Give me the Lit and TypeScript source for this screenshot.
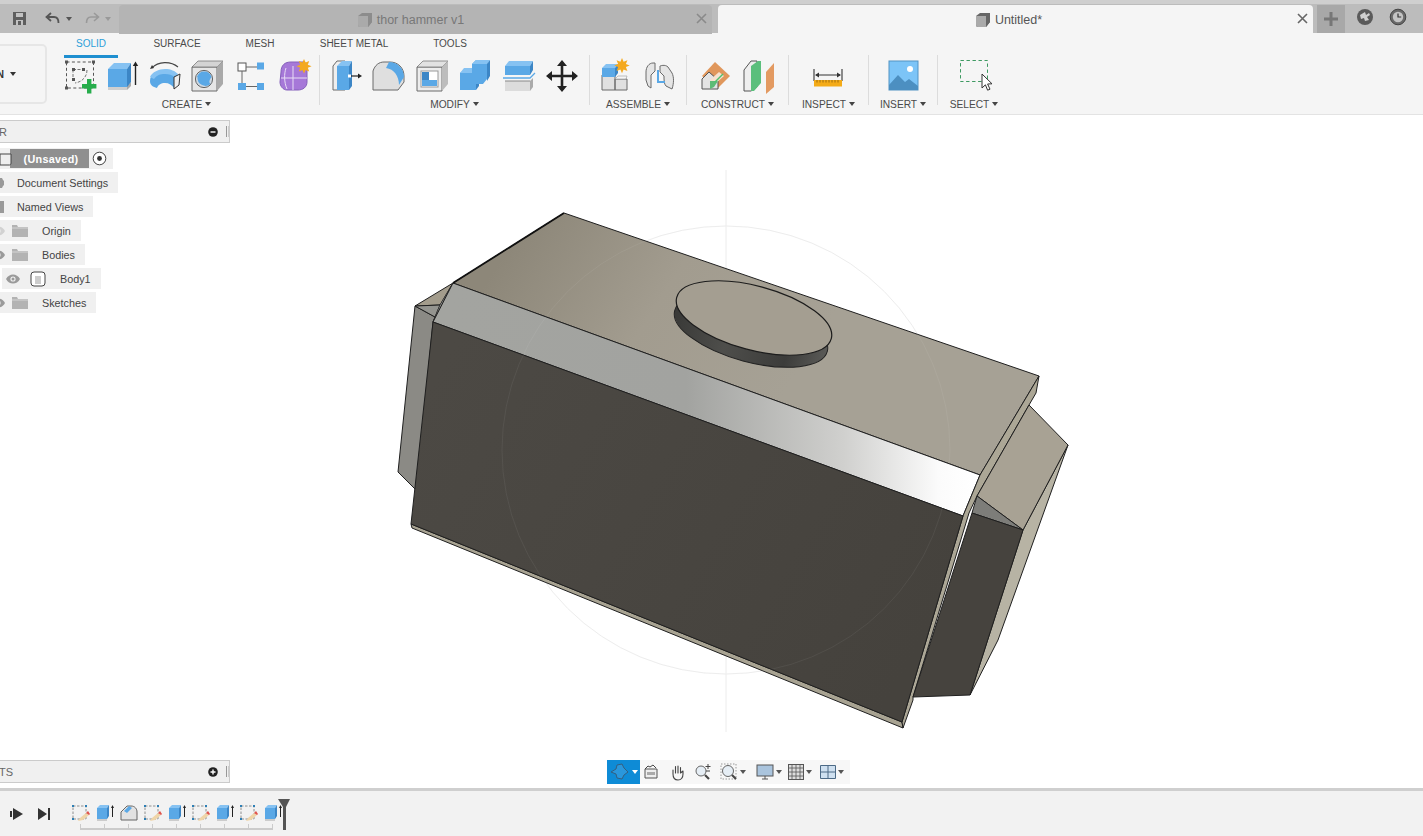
import { LitElement, html, css, svg } from "lit";
import { customElement } from "lit/decorators.js";

const B = "#5aa8e6", BL = "#86c2f2", BD = "#3c86c6", O = "#6a6a6a";

const icons: Record<string, any> = {
  sketch: svg`<rect x="5.500" y="4" width="27" height="26" fill="none" stroke="#555" stroke-dasharray="3 2.4"/>
    <path d="M12 11.500h10M12 11.500v10M26 12c0 7-5 12-12 13" fill="none" stroke="#777" stroke-dasharray="3 1.500"/>
    <g fill="#555"><rect x="4" y="2.500" width="3" height="3"/><rect x="31" y="2.500" width="3" height="3"/><rect x="4" y="28.500" width="3" height="3"/><rect x="11" y="10" width="3" height="3"/><rect x="11" y="20" width="3" height="3"/><rect x="21" y="10" width="3" height="3"/></g>
    <path d="M26 21h4.400v5h5v4.400h-5v5H26v-5h-5v-4.400h5z" fill="#27ad4c"/>`,
  extrude: svg`<path d="M4 28h19v4H4z" fill="#cfcfcf"/><path d="M23 28l4-4v4l-4 4z" fill="#aaa"/>
    <path d="M4 11h19v18H4z" fill="${B}"/><path d="M4 11l6-6h17l-4 6z" fill="${BL}"/><path d="M23 11l4-6v19l-4 5z" fill="${BD}"/>
    <path d="M31.500 27V6" stroke="#222" stroke-width="1.400"/><path d="M28.800 8l2.700-4.600L34.200 8z" fill="#222"/>`,
  revolve: svg`<path d="M3 23c0-7 7-10 15-10 6 0 10 1 13 4l-4 13c-2-3-5-5-9-5-4 0-7 2-8 5-4-1-7-3-7-7z" fill="${B}"/>
    <path d="M3 19c2-5 9-8 15-8 6 0 10 2 13 5l-3 3c-3-2-6-3-10-3-5 0-8 1-11 5z" fill="${BL}"/>
    <path d="M27 19l6-3-1 11-5 4z" fill="#eee" stroke="#333"/>
    <path d="M5 10C11 3 24 3 31 9" fill="none" stroke="#444" stroke-width="1.100"/><path d="M3 11l2-4 2 3z" fill="#333"/>`,
  hole: svg`<path d="M2 9h25v24H2z" fill="#e6e6e6" stroke="${O}"/><path d="M2 9l6-6h25l-6 6z" fill="#d4d4d4" stroke="${O}" stroke-width=".7"/><path d="M27 9l6-6v23l-6 7z" fill="#a9a9a9"/>
    <circle cx="14" cy="21" r="8.600" fill="#cdd8e2" stroke="#666"/><path d="M7 19a7.500 7.500 0 0 1 14.500 0c-2 3-3 5-1 7a8 8 0 0 1-13-7z" fill="${B}"/>`,
  form: svg`<rect x="5" y="5" width="8" height="8" fill="#fff" stroke="#555"/><rect x="24" y="4.500" width="7" height="7" fill="${B}"/>
    <rect x="5" y="25" width="8" height="7" fill="${B}"/><rect x="24" y="25" width="7" height="7" fill="${B}"/>
    <path d="M13 9h11M9 13v12M13 28.500h11" stroke="#666"/>`,
  derive: svg`<path d="M5 14c0-7 4-10 10-10h12c3 0 4 3 4 6v14c0 5-4 8-9 8H11c-4 0-7-4-7-8z" fill="#a678d8" stroke="#8560bb"/><path d="M5 20h26M17 8v24M10 10c-2 6-2 14 1 21" stroke="#e8def5" fill="none"/>
    <path d="M28 1l1.600 3.600 3.600-1.600-1.400 3.800 3.800 1.400-3.800 1.600 1.400 3.600-3.600-1.400-1.600 3.600-1.600-3.600-3.600 1.400 1.400-3.600-3.800-1.600 3.800-1.400-1.400-3.800 3.600 1.600z" fill="#f4a91f"/>`,
  press: svg`<path d="M5 8l4-5h8v29H5z" fill="#eee" stroke="${O}"/><path d="M9 8l5-5h10l-3 5z" fill="${BL}"/><path d="M9 8h12v24H9z" fill="${B}"/><path d="M21 8l3-5v25l-3 4z" fill="${BD}"/>
    <path d="M22 18h9" stroke="#222" stroke-width="1.200"/><path d="M30 15.500l4 2.500-4 2.500z" fill="#222"/><rect x="20" y="16.500" width="3" height="3" fill="#fff"/>`,
  fillet: svg`<path d="M2 13c2-6 6-9 11-9h6c8 0 14 6 14 14v6l-6 8H2z" fill="#dfdfdf" stroke="${O}"/><path d="M18 4c8 0 15 6 15 15l-5 8c0-9-5-16-13-17z" fill="${B}"/>`,
  shell: svg`<path d="M2 9h25v24H2z" fill="#ededed" stroke="${O}"/><path d="M2 9l6-6h25l-6 6z" fill="#e2e2e2" stroke="${O}" stroke-width=".7"/><path d="M27 9l6-6v23l-6 7z" fill="#bdbdbd"/>
    <rect x="6" y="13" width="17" height="16" fill="#fff" stroke="#999"/><path d="M7 14h7v8h8v6H7z" fill="${B}"/><path d="M7 14h7v8h-7z" fill="${BD}"/>`,
  combine: svg`<path d="M2 15l5-4h11v21H2z" fill="${B}"/><path d="M2 15l4-5h12l-3 5z" fill="${BL}"/><path d="M14 6l4-4h13l-2 5v14l-4 5H14z" fill="${B}"/><path d="M14 6l4-4h14l-3 4z" fill="${BL}"/><path d="M29 6l3-4v16l-3 5z" fill="${BD}"/><path d="M18 26v6l3-4v-2z" fill="${BD}"/>`,
  split: svg`<path d="M3 8l4-5h24l-3 5z" fill="${BL}"/><path d="M3 8h25v9H3z" fill="${B}"/><path d="M28 8l3-5v9l-3 5z" fill="${BD}"/>
    <path d="M1 20h27l5-5" stroke="${B}" fill="none" stroke-width="1.300"/><path d="M3 23h25v10H3z" fill="#dcdcdc"/><path d="M28 23l3-3v9l-3 4z" fill="#aaa"/><path d="M3 23h25" stroke="#888"/>`,
  move: svg`<path d="M17 4v28M3 18h28" stroke="#222" stroke-width="2.600"/><path d="M17 2l5 6H12zM17 34l5-6H12zM1 18l6-5v10zM33 18l-6-5v10z" fill="#222"/>`,
  newcomp: svg`<path d="M4 17h13v15H4zM17 21h12v11H17z" fill="#e0e0e0" stroke="${O}"/><path d="M4 10h13v9H4z" fill="${B}"/><path d="M4 10l4-4h12l-3 4z" fill="${BL}"/><path d="M17 10l3-4v9l-3 4z" fill="${BD}"/>
    <path d="M17 21l3-3h9l-1 3z" fill="#f5f5f5" stroke="#999" stroke-width=".6"/>
    <path d="M24 0l1.600 3.800 3.800-1.600-1.500 3.800 3.800 1.600-3.800 1.500 1.500 3.900-3.800-1.600-1.600 3.800-1.600-3.800-3.800 1.600 1.500-3.900-3.800-1.500 3.800-1.600-1.500-3.800 3.800 1.600z" fill="#f4a91f"/>`,
  joint: svg`<path d="M3 14c0-5 3-9 7-9h2v8l-4 4v13l-3-2-2-6z" fill="#e5e5e5" stroke="${O}"/><path d="M17 8c0 0 5-2 8 1l4 6c2 4 2 10 0 16l-6-3c-2-2-2-6-2-10l-4-4z" fill="#e5e5e5" stroke="${O}"/><path d="M15 12v12h7" fill="none" stroke="${B}" stroke-width="2"/>`,
  plane: svg`<path d="M17 4l15 14-13 13L4 18z" fill="#e0975c"/><path d="M4 31V21l7-7 9 8v9z" fill="#e3e3e3" stroke="#555"/><path d="M12 22l9-8 5 4-9 8z" fill="#f6e2cf"/><path d="M12 31v-8h8l-4 6z" fill="#5dbb76"/><path d="M17 24l8-8" stroke="#4fbf6e" stroke-width="1.500"/>`,
  mid: svg`<path d="M2 12l7-9h6v26l-6 4H2z" fill="#eee" stroke="#555"/><path d="M9 33V8l7-5h3v22l-7 8z" fill="#5bbf7c"/><path d="M24 14l8-9v24l-8 7z" fill="#e39a61"/>`,
  measure: svg`<path d="M3 11v12M31 11v12" stroke="#333" stroke-width="1.100"/><path d="M5 17h24" stroke="#333"/><path d="M4 17l4-2.600v5.200zM30 17l-4-2.600v5.200z" fill="#333"/>
    <rect x="3" y="22" width="28" height="6.500" fill="#f4ab18"/><path d="M6 22v2.500M9 22v2.500M12 22v2.500M15 22v2.500M18 22v2.500M21 22v2.500M24 22v2.500M27 22v2.500" stroke="#8a5d07" stroke-width=".8"/>`,
  image: svg`<rect x="4" y="3" width="29" height="29" fill="#7cc4f7" stroke="#5294c4"/><circle cx="25" cy="11" r="3" fill="#fff"/><path d="M4 27l9-10 7 7 4-3 9 7v4H4z" fill="#4c8fc1"/>`,
  select: svg`<rect x="4.500" y="2.500" width="27" height="21" fill="none" stroke="#3e9a62" stroke-dasharray="3.400 2.600"/><path d="M26 16v14l3.400-3.200 2.200 5.400 2.400-1-2.400-5.200 4.400-.2z" fill="#fff" stroke="#333"/>`,
};

const groups = [
  { label: "CREATE", w: 266, c: 43, icons: ["sketch", "extrude", "revolve", "hole", "form", "derive"] },
  { label: "MODIFY", w: 270, c: 43.5, icons: ["press", "fillet", "shell", "combine", "split", "move"] },
  { label: "ASSEMBLE", w: 97, c: 45, icons: ["newcomp", "joint"] },
  { label: "CONSTRUCT", w: 102, c: 44, icons: ["plane", "mid"] },
  { label: "INSPECT", w: 80, c: 43, icons: ["measure"] },
  { label: "INSERT", w: 69, c: 43, icons: ["image"] },
  { label: "SELECT", w: 72, c: 43, icons: ["select"] },
];

const tabs = [
  { t: "SOLID", w: 54, on: true }, { t: "SURFACE", w: 118 }, { t: "MESH", w: 48 },
  { t: "SHEET METAL", w: 140 }, { t: "TOOLS", w: 52 },
];

const cube = (c = "#777") => html`<svg width="16" height="16" viewBox="0 0 16 16"><path d="M1 4l4-3h10v9l-4 5H3C1 15 1 13 1 12z" fill="${c}"/><path d="M1 4h10v11H3C1 15 1 13 1 12z" fill="#aaa"/><path d="M11 4l4-3v9l-4 5z" fill="${c}"/></svg>`;
const folder = html`<svg class="ic" width="16" height="12" viewBox="0 0 16 12"><path d="M0 0h5l1 2h10v10H0z" fill="#b3b3b3"/><path d="M0 3h16" stroke="#eee" stroke-width=".6"/></svg>`;
const eye = (c: string) => html`<svg width="14" height="10" viewBox="0 0 14 10"><path d="M0 5c3-6 11-6 14 0-3 6-11 6-14 0z" fill="${c}"/><circle cx="7" cy="5" r="2.600" fill="#f0f0f0"/><circle cx="7" cy="5" r="1.500" fill="${c}"/></svg>`;

const miniSketch = html`<svg width="20" height="20" viewBox="0 0 20 20"><rect x="2" y="3" width="13" height="13" fill="none" stroke="#777" stroke-dasharray="2.500 1.500" stroke-width=".8"/><g fill="#2d7fb5"><rect x="1" y="2" width="2" height="2"/><rect x="14" y="2" width="2" height="2"/><rect x="1" y="15" width="2" height="2"/></g><path d="M7 18l2-3 6-5 3 2-6 5z" fill="#efd5a8"/><path d="M15 10l3 2 1-1-2-3z" fill="#e0534b"/></svg>`;
const miniExtrude = html`<svg width="20" height="20" viewBox="0 0 20 20"><path d="M2 5h10v11H2z" fill="${B}"/><path d="M2 5l3-3h9l-2 3z" fill="${BL}"/><path d="M12 5l2-3v11l-2 3z" fill="${BD}"/><path d="M2 16h10v2H2z" fill="#ccc"/><path d="M17.500 14V4" stroke="#222"/><path d="M16 5l1.500-3L19 5z" fill="#222"/></svg>`;
const miniFillet = html`<svg width="20" height="20" viewBox="0 0 20 20"><path d="M2 9l6-6h4c4 0 6 3 6 6v8H2z" fill="#e2e2e2" stroke="#666"/><path d="M5 8l5-5 3 2-5 5z" fill="${B}"/></svg>`;
const timeline = [miniSketch, miniExtrude, miniFillet, miniSketch, miniExtrude, miniSketch, miniExtrude, miniSketch, miniExtrude];

@customElement("app-root")
export class AppRoot extends LitElement {
  static styles = css`
    :host { display: block; width: 1423px; height: 836px; overflow: hidden; background: #fff; font-family: "Liberation Sans", Arial, sans-serif; color: #4a4a4a; font-size: 11px; }
    .app { display: flex; flex-direction: column; height: 836px; }
    .caret { display: inline-block; width: 0; height: 0; border-left: 3px solid transparent; border-right: 3px solid transparent; border-top: 4px solid #444; margin-left: 3px; vertical-align: 2px; }

    .topbar { height: 33px; flex: none; display: flex; background: #bcbcbc; border-top: 4px solid #cfcfcf; box-sizing: border-box; }
    .qa { width: 119px; flex: none; display: flex; align-items: center; padding-left: 12px; box-sizing: border-box; }
    .qa svg { flex: none; }
    .qa .save { margin-right: 18px; }
    .qa .undo { margin-right: 6px; }
    .qa .redo { margin-left: 13px; margin-right: 5px; }
    .qa .caret { border-top-color: #555; margin: 0; }
    .qa .caret.off { border-top-color: #999; }
    .tab { flex: none; height: 29px; margin-top: 1px; box-sizing: border-box; display: flex; align-items: center; justify-content: center; position: relative; border-radius: 4px 4px 0 0; font-size: 12.5px; }
    .tab.off { width: 593px; background: #b4b4b4; color: #787878; margin-right: 6px; padding-right: 10px; }
    .tab.on { width: 595px; background: #f5f5f5; color: #555; margin-right: 4px; padding-right: 14px; }
    .tab .t-ic { margin-right: 4px; display: flex; }
    .tab .x { position: absolute; right: 4px; top: 7px; width: 13px; height: 13px; }
    .plus { width: 28px; height: 28px; margin-top: 1px; background: #a8a8a8; flex: none; display: flex; align-items: center; justify-content: center; }
    .sysic { flex: none; display: flex; align-items: center; margin-top: -3px; }
    .sysic.a { margin-left: 11px; }
    .sysic.b { margin-left: 15px; }

    .ribbon { height: 82px; flex: none; background: #f5f5f5; border-bottom: 1px solid #e3e3e3; box-sizing: border-box; display: flex; flex-direction: column; }
    .tabs { display: flex; height: 22px; padding-left: 64px; }
    .rtab { text-align: center; line-height: 22px; position: relative; color: #4a4a4a; font-size: 10px; }
    .rtab.on { color: #2c9fd9; }
    .rtab.on::after { content: ""; position: absolute; left: 0; right: 0; top: 22px; height: 2.500px; background: #1f8fd0; }
    .groups { display: flex; height: 59px; }
    .ws { flex: none; width: 57px; margin-left: -10px; margin-top: -11px; height: 60px; box-sizing: border-box; border: 2px solid #e6e6e6; border-radius: 5px; display: flex; align-items: center; justify-content: flex-end; padding-right: 29px; font-weight: bold; font-size: 10px; color: #333; white-space: nowrap; }
    .ws .caret { margin-left: 6px; border-top-color: #333; }
    .grp { flex: none; box-sizing: border-box; display: flex; flex-direction: column; align-items: center; }
    .grp.first { margin-left: 7px; }
    .grp.sep { border-right: 1px solid #dcdcdc; height: 50px; }
    .grp .icons { display: flex; justify-content: center; height: 36px; margin-top: 3px; }
    .grp .cell { display: flex; justify-content: center; }
    .grp .lbl { font-size: 10.2px; margin-top: 4px; white-space: nowrap; line-height: 13px; }

    .canvas { flex: 1; position: relative; background: #fff; overflow: hidden; }
    .geom { position: absolute; left: 0; top: 0; }

    .bar { position: absolute; left: 0; width: 230px; height: 23px; box-sizing: border-box; background: #f0f0f0; border: 1px solid #cbcbcb; border-left: 0; display: flex; align-items: center; color: #666; }
    .bar.hd { top: 5px; }
    .bar.ft { top: 645px; }
    .bar .name { flex: 1; margin-left: -1px; }
    .bar .grip { width: 1px; height: 11px; background: #999; margin: 0 2px 0 8px; box-shadow: 2px 0 0 #ccc; }
    .tree { position: absolute; left: 0; top: 33px; display: flex; flex-direction: column; gap: 3px; }
    .row { display: flex; height: 21px; }
    .pill { display: flex; align-items: center; background: #f0f0f0; padding-right: 10px; height: 21px; color: #444; white-space: nowrap; font-size: 10.8px; }
    .lead { display: flex; justify-content: flex-end; align-items: center; overflow: hidden; flex: none; }
    .lead.l12 { width: 12px; }
    .lead.l12 svg { margin-right: 7px; flex: none; }
    .lead.l17 { width: 17px; justify-content: flex-start; }
    .ic { margin-right: 14px; flex: none; }
    .root { padding-right: 0; }
    .rootbox { height: 19px; background: #8f8f8f; color: #fff; font-weight: bold; display: flex; align-items: center; justify-content: center; width: 79px; margin-left: 10px; letter-spacing: .3px; padding-left: 3px; box-sizing: border-box; position: relative; }
    .rootbox svg { position: absolute; left: -14px; top: 1px; }
    .radio { margin: 0 6px 0 3px; flex: none; }
    .body { margin-left: 2px; }
    .body .e { margin: 0 10px 0 4px; display: flex; }
    .body .c { margin-right: 14px; display: flex; }

    .nav { position: absolute; left: 607px; top: 645px; height: 24px; display: flex; align-items: center; background: #f7f7f7; }
    .nav .cur { width: 33px; height: 24px; background: #0e8bd6; display: flex; align-items: center; padding-left: 3px; box-sizing: border-box; }
    .nav .cur .caret { border-top-color: #fff; margin-left: 2px; }
    .nav .n { display: flex; align-items: center; justify-content: center; height: 24px; }
    .nav .caret { margin-left: 2px; border-top-color: #555; }
    .w22 { width: 22px; } .w28 { width: 28px; } .w30 { width: 30px; } .w34 { width: 34px; } .w36 { width: 36px; } .w38 { width: 38px; }

    .tl { height: 48px; flex: none; background: #f2f2f2; border-top: 3px solid #cfcfcf; box-sizing: border-box; display: flex; position: relative; padding-left: 10px; }
    .ctrl { display: flex; align-items: center; gap: 13px; width: 59px; height: 45px; flex: none; }
    .steps { display: flex; flex-direction: column; }
    .steps .items { display: flex; margin-top: 12px; }
    .steps .it { width: 24px; height: 20px; display: flex; justify-content: center; }
    .ruler { height: 6px; margin: 1px 0 0 11px; width: 193px; box-sizing: border-box; border-bottom: 2px solid #cbcbcb; background: repeating-linear-gradient(90deg, #cbcbcb 0 1px, transparent 1px 24px); }
    .head { position: absolute; left: 278px; top: 8px; }
  `;

  private ribbon() {
    return html`<div class="ribbon">
      <div class="tabs">${tabs.map((t) => html`<div class="rtab ${t.on ? "on" : ""}" style="width:${t.w}px">${t.t}</div>`)}</div>
      <div class="groups">
        <div class="ws">N<i class="caret"></i></div>
        ${groups.map((g, i) => html`<div class="grp ${i === 0 ? "first" : ""} ${i < 6 ? "sep" : ""}" style="width:${g.w}px">
          <div class="icons">${g.icons.map((n) => html`<div class="cell" style="width:${g.c}px"><svg width="36" height="36" viewBox="0 0 36 36">${icons[n]}</svg></div>`)}</div>
          <div class="lbl">${g.label}<i class="caret"></i></div>
        </div>`)}
      </div>
    </div>`;
  }

  private topbar() {
    return html`<div class="topbar">
      <div class="qa">
        <svg class="save" width="15" height="15" viewBox="0 0 15 15"><path d="M1 1h13v13H1z" fill="#5e5e5e"/><path d="M4 2h7v4H4z" fill="#c2c2c2"/><path d="M4 9h7v5H4z" fill="#c2c2c2"/><path d="M6 10h3v4H6z" fill="#5e5e5e"/></svg>
        <svg class="undo" width="15" height="13" viewBox="0 0 15 13"><path d="M6 1L1.500 5 6 9M2 5h7c3 0 4.500 2 4.500 6" fill="none" stroke="#555" stroke-width="1.800"/></svg>
        <i class="caret"></i>
        <svg class="redo" width="15" height="13" viewBox="0 0 15 13"><path d="M9 1l4.500 4L9 9M13 5H6C3 5 1.500 7 1.500 11" fill="none" stroke="#999" stroke-width="1.600"/></svg>
        <i class="caret off"></i>
      </div>
      <div class="tab off"><span class="t-ic">${cube("#8c8c8c")}</span>thor hammer v1
        <svg class="x" viewBox="0 0 13 13"><path d="M2 2l9 9M11 2l-9 9" stroke="#8a8a8a" stroke-width="1.600"/></svg></div>
      <div class="tab on"><span class="t-ic">${cube("#666")}</span>Untitled*
        <svg class="x" viewBox="0 0 13 13"><path d="M2 2l9 9M11 2l-9 9" stroke="#666" stroke-width="1.600"/></svg></div>
      <div class="plus"><svg width="14" height="14" viewBox="0 0 14 14"><path d="M7 0v14M0 7h14" stroke="#777" stroke-width="3"/></svg></div>
      <div class="sysic a"><svg width="18" height="18" viewBox="0 0 18 18"><circle cx="9" cy="9" r="8" fill="#5a5a5a"/><path d="M4 7l5-3 1 3 3-2 1 2-3 2 2 3-4 1-1-3-3 1z" fill="#d0d0d0"/></svg></div>
      <div class="sysic b"><svg width="18" height="18" viewBox="0 0 18 18"><circle cx="9" cy="9" r="7.800" fill="#6a6a6a" stroke="#444"/><circle cx="9" cy="9" r="5.200" fill="#c4c4c4"/><path d="M9 5.500V9h3.200" fill="none" stroke="#333" stroke-width="1.200"/></svg></div>
    </div>`;
  }

  private geometry() {
    const L = "#1f1f1f";
    return html`<svg class="geom" width="1423" height="673" viewBox="0 115 1423 673">
      <defs>
        <linearGradient id="cham" gradientUnits="userSpaceOnUse" x1="450" y1="0" x2="975" y2="0">
          <stop offset="0" stop-color="#a3a4a0"/><stop offset=".45" stop-color="#a2a3a0"/><stop offset=".75" stop-color="#d0d0ce"/><stop offset=".93" stop-color="#fbfbfb"/><stop offset="1" stop-color="#fff"/>
        </linearGradient>
        <linearGradient id="top" gradientUnits="userSpaceOnUse" x1="520" y1="230" x2="780" y2="400">
          <stop offset="0" stop-color="#8d8779"/><stop offset=".5" stop-color="#a29c8f"/><stop offset="1" stop-color="#a6a195"/>
        </linearGradient>
        <linearGradient id="front" gradientUnits="userSpaceOnUse" x1="420" y1="400" x2="900" y2="680">
          <stop offset="0" stop-color="#4c4944"/><stop offset="1" stop-color="#45423d"/>
        </linearGradient>
        <linearGradient id="wall" gradientUnits="userSpaceOnUse" x1="675" y1="0" x2="830" y2="0">
          <stop offset="0" stop-color="#3a3a38"/><stop offset=".35" stop-color="#4e4e4b"/><stop offset=".75" stop-color="#3c3c3a"/><stop offset="1" stop-color="#5a5a57"/>
        </linearGradient>
      </defs>
      <g fill="none" stroke="#ececec">
        <circle cx="726" cy="450" r="224"/>
        <path d="M726 170V732"/>
      </g>
      <g stroke="${L}" stroke-width="1" stroke-linejoin="round">
        <polygon points="415,306 435,317 433,322 417,491 398,472" fill="#8b8a85"/>
        <polygon points="415,306 453,283 440,305" fill="#a39c8c"/>
        <polygon points="415,306 440,305 435,317" fill="#94948f"/>
        <polygon points="440,305 453,283 433,322 435,317" fill="#a3a4a0" stroke-width=".6"/>
        <polygon points="564,213 1039,376 980,475 453,283" fill="url(#top)"/>
        <polygon points="453,283 980,475 963,516 433,322" fill="url(#cham)"/>
        <polygon points="411,524 902,722 903,728 412,528" fill="#a8a392"/>
        <polygon points="1039,376 1036,393 1029,405 977,496 969,513 913,697 913,700 903,728 902,722 963,516 980,475" fill="#aca796"/>
        <polygon points="433,322 963,516 902,722 411,524" fill="url(#front)"/>
        <polygon points="1068,445 1023,530 970,695 998,640" fill="#b7b3a4"/>
        <polygon points="1029,405 1068,445 1023,530 977,496" fill="#a8a294"/>
        <polygon points="977,496 1023,530 972,513" fill="#7d7d79"/>
        <polygon points="972,513 1023,530 970,695 913,697" fill="#46433e"/>
      </g>
      <path d="M564 213L453 283" stroke="#111" stroke-width="1.800"/>
      <ellipse cx="751" cy="331" rx="79" ry="31" transform="rotate(15 751 331)" fill="url(#wall)" stroke="#222"/>
      <ellipse cx="754" cy="318" rx="80" ry="32" transform="rotate(15 754 318)" fill="#a49e91" stroke="#1c1c1c" stroke-width="1.200"/>
      <g fill="none" stroke="#fff" stroke-opacity=".06"><circle cx="726" cy="450" r="224"/></g>
    </svg>`;
  }

  private panels() {
    return html`
      <div class="bar hd"><span class="name">R</span>
        <svg width="10" height="10" viewBox="0 0 10 10"><circle cx="5" cy="5" r="4.800" fill="#222"/><path d="M2.500 5h5" stroke="#fff" stroke-width="1.400"/></svg>
        <span class="grip"></span></div>
      <div class="tree">
        <div class="row"><span class="pill root"><span class="rootbox"><svg width="16" height="16" viewBox="0 0 16 16"><path d="M4 4h11v9c0 2-1 2-2 2H4z" fill="#eee" stroke="#444"/></svg>(Unsaved)</span>
          <svg class="radio" width="15" height="15" viewBox="0 0 15 15"><circle cx="7.500" cy="7.500" r="6.300" fill="#fff" stroke="#444"/><circle cx="7.500" cy="7.500" r="2.400" fill="#333"/></svg></span></div>
        <div class="row"><span class="pill"><span class="lead l17"><svg width="4" height="12" viewBox="0 0 4 12"><path d="M0 1h2l1 2 1 1v4l-1 1-1 2H0z" fill="#999"/></svg></span>Document Settings</span></div>
        <div class="row"><span class="pill"><span class="lead l17"><svg width="4" height="12" viewBox="0 0 4 12"><path d="M0 0h4v12H0z" fill="#999"/></svg></span>Named Views</span></div>
        <div class="row"><span class="pill"><span class="lead l12">${eye("#d2d2d2")}</span>${folder}Origin</span></div>
        <div class="row"><span class="pill"><span class="lead l12">${eye("#9a9a9a")}</span>${folder}Bodies</span></div>
        <div class="row body"><span class="pill"><span class="e">${eye("#9a9a9a")}</span>
          <span class="c"><svg width="16" height="16" viewBox="0 0 16 16"><rect x="1" y="1" width="14" height="14" rx="3" fill="#fff" stroke="#444"/><rect x="5" y="5" width="6" height="8" fill="#ccc"/></svg></span>Body1</span></div>
        <div class="row"><span class="pill"><span class="lead l12">${eye("#9a9a9a")}</span>${folder}Sketches</span></div>
      </div>
      <div class="bar ft"><span class="name">TS</span>
        <svg width="10" height="10" viewBox="0 0 10 10"><circle cx="5" cy="5" r="4.800" fill="#222"/><path d="M2.500 5h5M5 2.500v5" stroke="#fff" stroke-width="1.400"/></svg>
        <span class="grip"></span></div>
      <div class="nav">
        <div class="cur"><svg width="20" height="20" viewBox="0 0 20 20"><path d="M7 3l5-1 2 4 4 4-4 3-2 4-5-1-1-4-5-2 5-3z" fill="#2a97dc" stroke="#355f80" stroke-width="1"/></svg><i class="caret"></i></div>
        <div class="n w22"><svg width="16" height="16" viewBox="0 0 16 16"><path d="M2 5h12v9H2z" fill="#eee" stroke="#555"/><path d="M2 5l3-3 2 1 3-2 3 3" fill="none" stroke="#444"/><rect x="4" y="8" width="8" height="3" fill="#aaa"/></svg></div>
        <div class="n w30"><svg width="17" height="17" viewBox="0 0 17 17"><path d="M4 10V6M6.500 9V2.500M9 9V2M11.500 9V3.500M4 10c0 4 2 6 5 6s5-2 5-6V7M14 7l-2.500 2" fill="none" stroke="#444" stroke-width="1.100" stroke-linecap="round"/></svg></div>
        <div class="n w22"><svg width="18" height="18" viewBox="0 0 18 18"><circle cx="7" cy="8" r="5" fill="#e6eef5" stroke="#666"/><path d="M11 12l4 4" stroke="#444" stroke-width="2.200"/><path d="M14 1v5M11.500 3.500h5M12 8h4" stroke="#444"/></svg></div>
        <div class="n w38"><svg width="18" height="18" viewBox="0 0 18 18"><rect x="1" y="1" width="15" height="15" fill="none" stroke="#999" stroke-dasharray="1.500 1.500"/><circle cx="8" cy="8" r="5.500" fill="#e6eef5" stroke="#666"/><path d="M12 12l4 4" stroke="#444" stroke-width="2.200"/></svg><i class="caret"></i></div>
        <div class="n w34"><svg width="18" height="16" viewBox="0 0 18 16"><rect x="1" y="1" width="16" height="11" fill="#aac4dd" stroke="#555"/><path d="M6 15h6M9 12v3" stroke="#555"/></svg><i class="caret"></i></div>
        <div class="n w28"><svg width="16" height="16" viewBox="0 0 16 16"><rect x=".5" y=".5" width="15" height="15" fill="#ddd" stroke="#555"/><path d="M4 0v16M8 0v16M12 0v16M0 4h16M0 8h16M0 12h16" stroke="#555" stroke-width=".8"/></svg><i class="caret"></i></div>
        <div class="n w36"><svg width="16" height="14" viewBox="0 0 16 14"><path d="M.5.5h15v13H.5zM8 .5v13M.5 7h15" fill="#cfe0f0" stroke="#4c6a86"/></svg><i class="caret"></i></div>
      </div>`;
  }

  render() {
    return html`<div class="app">
      ${this.topbar()}
      ${this.ribbon()}
      <div class="canvas">${this.geometry()}${this.panels()}</div>
      <div class="tl">
        <div class="ctrl">
          <svg width="14" height="14" viewBox="0 0 14 14"><rect x="0" y="4" width="2" height="6" fill="#333"/><path d="M3 1l10 6-10 6z" fill="#333"/></svg>
          <svg width="14" height="14" viewBox="0 0 14 14"><path d="M1 1l9 6-9 6z" fill="#333"/><rect x="11" y="1" width="2" height="12" fill="#333"/></svg>
        </div>
        <div class="steps">
          <div class="items">${timeline.map((t) => html`<div class="it">${t}</div>`)}</div>
          <div class="ruler"></div>
        </div>
        <svg class="head" width="13" height="31" viewBox="0 0 13 31"><path d="M0 0h12l-4 8v23H5V8z" fill="#555"/></svg>
      </div>
    </div>`;
  }
}
